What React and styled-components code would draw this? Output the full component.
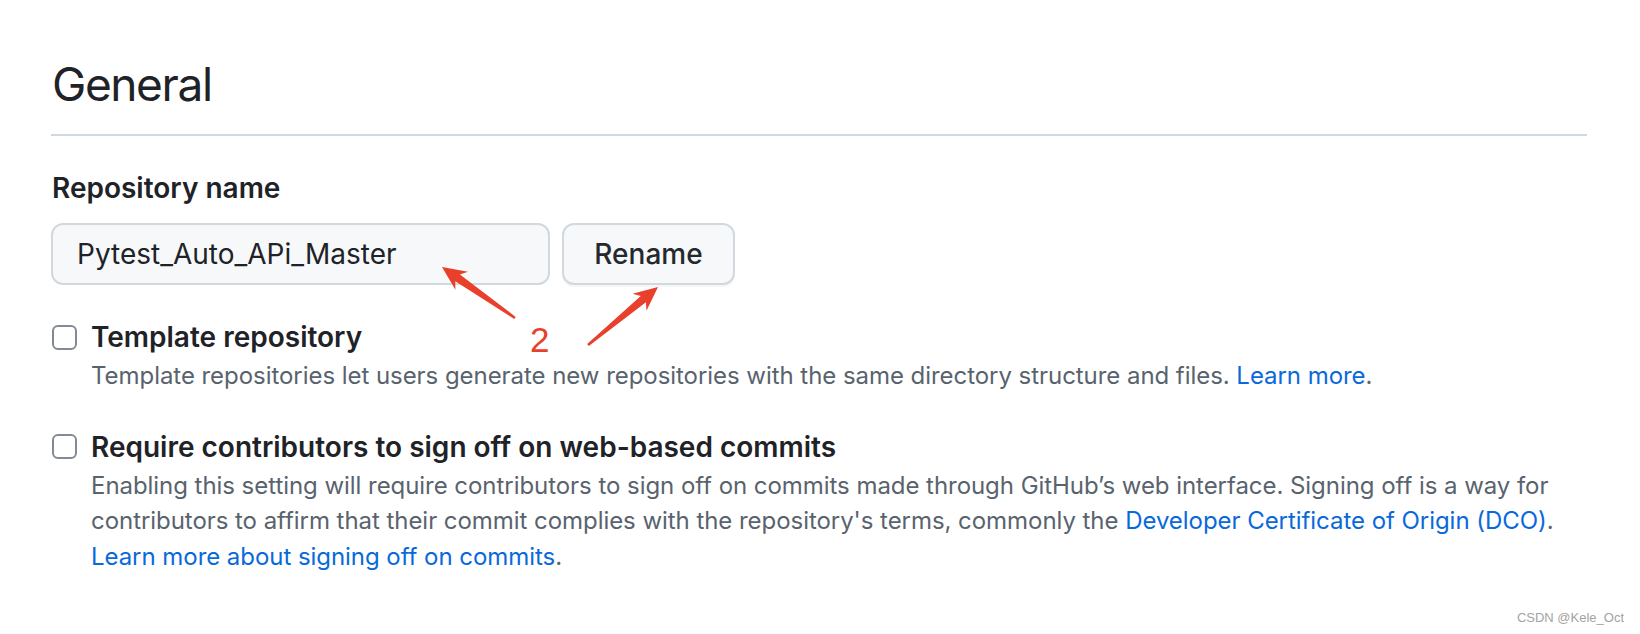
import React from "react";
import styled, { createGlobalStyle } from "styled-components";

const GlobalStyle = createGlobalStyle`
  html, body {
    margin: 0;
    padding: 0;
    background: #ffffff;
  }
  body {
    font-family: Inter, "Noto Sans", "Liberation Sans", sans-serif;
    color: #1f2328;
  }
`;

const Page = styled.div`
  position: relative;
  width: 1640px;
  height: 634px;
  overflow: hidden;
  box-sizing: border-box;
  padding: 48px 53px 0 51px;
`;

const Title = styled.h2`
  margin: 0;
  padding: 0 0 14px 1px;
  font-size: 46px;
  line-height: 72px;
  font-weight: 400;
  letter-spacing: -1.4px;
  color: #1f2328;
  border-bottom: 2px solid #d1d9e0;
`;

const Field = styled.div`
  margin-top: 31px;
`;

const FieldLabel = styled.label`
  display: block;
  padding-left: 1px;
  font-size: 28px;
  line-height: 42px;
  font-weight: 600;
  color: #1f2328;
`;

const InputRow = styled.div`
  display: flex;
  gap: 12px;
  margin-top: 14px;
`;

const TextInput = styled.input`
  box-sizing: border-box;
  width: 499px;
  height: 62px;
  padding: 0 24px;
  border: 2px solid #d1d9e0;
  border-radius: 12px;
  background: #f6f8fa;
  font-family: Inter, "Noto Sans", "Liberation Sans", sans-serif;
  font-size: 28px;
  color: #1f2328;
  outline: none;
`;

const Button = styled.button`
  box-sizing: border-box;
  width: 173px;
  height: 62px;
  border: 2px solid #d1d9e0;
  border-radius: 12px;
  background: #f6f8fa;
  box-shadow: 0 2px 0 rgba(31, 35, 40, 0.04);
  font-family: Inter, "Noto Sans", "Liberation Sans", sans-serif;
  font-size: 28px;
  font-weight: 500;
  color: #25292e;
  cursor: pointer;
`;

const Option = styled.div`
  display: grid;
  grid-template-columns: 25px 1fr;
  column-gap: 14px;
  margin-top: ${(p) => p.$gap}px;
  padding-left: 1px;
`;

const Check = styled.input.attrs({ type: "checkbox" })`
  appearance: none;
  margin: 0;
  align-self: center;
  width: 25px;
  height: 25px;
  box-sizing: border-box;
  border: 2px solid #818b98;
  border-radius: 6px;
  background: #ffffff;
`;

const OptionTitle = styled.div`
  font-size: 28px;
  line-height: 42px;
  font-weight: 600;
  color: #1f2328;
`;

const OptionText = styled.p`
  grid-column: 2;
  margin: 0;
  max-width: 1496px;
  font-size: 24px;
  line-height: 35.5px;
  letter-spacing: -0.05px;
  color: #59636e;
`;

const Link = styled.a`
  color: #0969da;
  text-decoration: none;
`;

const Annotation = styled.svg`
  position: absolute;
  left: 0;
  top: 0;
  pointer-events: none;
`;

const Watermark = styled.div`
  position: absolute;
  right: 16px;
  bottom: 9px;
  font-family: "Liberation Sans", Arial, sans-serif;
  font-size: 13px;
  color: #a3a3a3;
`;

// tapered arrow polygon from tail to tip
function arrowPoints(tx, ty, px, py) {
  const dx = px - tx;
  const dy = py - ty;
  const len = Math.hypot(dx, dy);
  const ux = dx / len;
  const uy = dy / len;
  const nx = -uy;
  const ny = ux;
  const hl = 24;
  const hw = 11;
  const sw = 4;
  const tw = 1.3;
  const bx = px - ux * hl;
  const by = py - uy * hl;
  const nk = 5;
  const kx = bx + ux * nk;
  const ky = by + uy * nk;
  const pts = [
    [tx + nx * tw, ty + ny * tw],
    [kx + nx * sw, ky + ny * sw],
    [bx + nx * hw, by + ny * hw],
    [px, py],
    [bx - nx * hw, by - ny * hw],
    [kx - nx * sw, ky - ny * sw],
    [tx - nx * tw, ty - ny * tw],
  ];
  return pts.map((p) => p.map((v) => v.toFixed(1)).join(",")).join(" ");
}

export default function App() {
  return (
    <>
      <GlobalStyle />
      <Page>
        <Title>General</Title>
        <Field>
          <FieldLabel>Repository name</FieldLabel>
          <InputRow>
            <TextInput defaultValue="Pytest_Auto_APi_Master" readOnly />
            <Button type="button">Rename</Button>
          </InputRow>
        </Field>
        <Option $gap={31}>
          <Check />
          <OptionTitle>Template repository</OptionTitle>
          <OptionText>
            Template repositories let users generate new repositories with the
            same directory structure and files. <Link href="#">Learn more</Link>.
          </OptionText>
        </Option>
        <Option $gap={32}>
          <Check />
          <OptionTitle>Require contributors to sign off on web-based commits</OptionTitle>
          <OptionText>
            Enabling this setting will require contributors to sign off on
            commits made through GitHub’s web interface. Signing off is a way
            for contributors to affirm that their commit complies with the
            repository's terms, commonly the{" "}
            <Link href="#">Developer Certificate of Origin (DCO)</Link>.{" "}
            <Link href="#">Learn more about signing off on commits</Link>.
          </OptionText>
        </Option>
        <Annotation width="1640" height="634" viewBox="0 0 1640 634">
          <polygon points={arrowPoints(515, 318, 442, 267)} fill="#e8402b" />
          <polygon points={arrowPoints(588, 345, 658, 287)} fill="#e8402b" />
          <text
            x="530"
            y="352"
            fill="#e8402b"
            fontFamily="Liberation Sans, Arial, sans-serif"
            fontSize="35"
          >
            2
          </text>
        </Annotation>
        <Watermark>CSDN @Kele_Oct</Watermark>
      </Page>
    </>
  );
}
